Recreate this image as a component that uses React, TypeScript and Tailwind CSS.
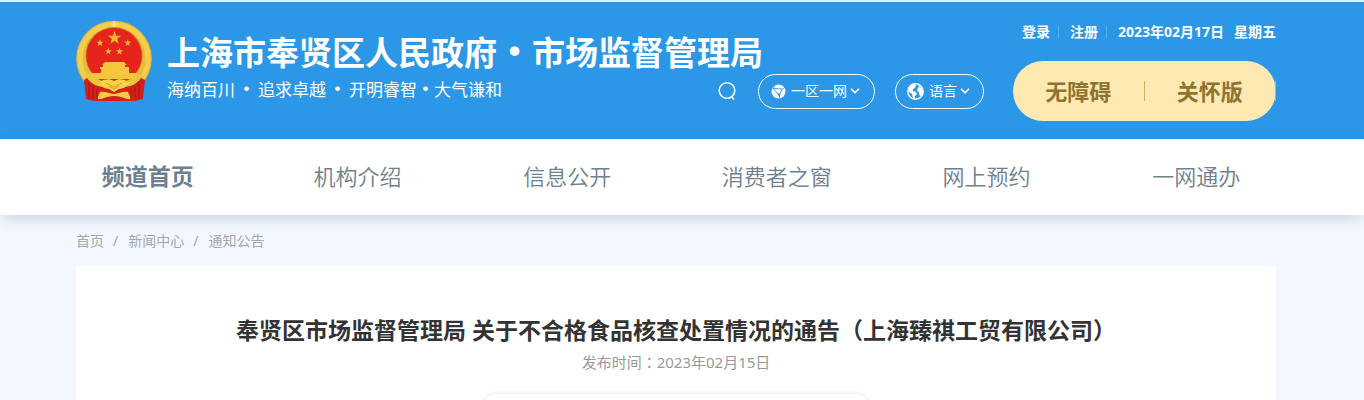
import { ChevronDown } from "lucide-react";

const NAV = ["频道首页", "机构介绍", "信息公开", "消费者之窗", "网上预约", "一网通办"];
const CRUMBS = ["首页", "新闻中心", "通知公告"];

function Star({ x, y, r }: { x: number; y: number; r: number }) {
  const points = Array.from({ length: 10 }, (_, i) => {
    const a = (i * Math.PI) / 5 - Math.PI / 2;
    const d = i % 2 ? r * 0.4 : r;
    return `${x + d * Math.cos(a)},${y + d * Math.sin(a)}`;
  }).join(" ");
  return <polygon points={points} fill="#f1b92f" />;
}

function Emblem() {
  return (
    <svg viewBox="0 0 76 82" className="h-[82px] w-[76px] shrink-0" aria-hidden="true">
      <circle cx="38" cy="38.5" r="37.8" fill="#e9bb3a" />
      <circle cx="38" cy="38.5" r="34" fill="none" stroke="#f3cf4e" strokeWidth="5" />
      <path d="M38 1v6M35 4h6" stroke="#fbe777" strokeWidth="1.5" />
      <circle cx="38" cy="35.5" r="28.5" fill="#c98f1e" />
      <circle cx="38" cy="35.8" r="27.8" fill="#e5251b" />
      <Star x={38.5} y={18} r={7} />
      <Star x={24} y={23} r={3.7} />
      <Star x={51.7} y={23} r={3.7} />
      <Star x={32.3} y={31.5} r={3.7} />
      <Star x={43.5} y={31.5} r={3.7} />
      <path d="M29 42h19l3 3H26zM27 45h22v2h4v2H24v-2h3zM25 49h28v4h8v6H15v-6h10z" fill="#f6c63c" />
      <path d="M11 53c7 8 16 9 21 9h13c5 0 14-1 20-9l4 6-12 12H20L8 59z" fill="#efc440" />
      <path d="M11 58c5 7 12 9 18 9 4 0 6 3 9 3s5-3 9-3c6 0 13-2 18-9l4 2-2 19-8 2H18l-8-2-2-19z" fill="#d3201a" />
      <path d="M27 60l6-1 5 2 5-2 6 1 4 3-5 5-5 1-5 3-5-3-5-1-5-5z" fill="#f8d34a" />
      <path d="M30 63l8 4 8-4M33 66l5 3 5-3" fill="none" stroke="#d69a22" />
      <path d="M24 72c6-1 9 2 14 2s8-3 14-2l3 7c-5 1-9-3-17-3s-12 4-17 3z" fill="#f5cb43" />
      <path d="M13 63v16M17 66v13M21 69v11M63 63v16M59 66v13M55 69v11" stroke="#a31410" fill="none" />
    </svg>
  );
}

function SearchIcon() {
  return (
    <svg viewBox="0 0 18 20" className="h-5 w-[18px]" fill="none" stroke="#fff" strokeWidth="1.6" aria-hidden="true">
      <circle cx="9" cy="9.5" r="7.8" />
      <path d="M13.5 15.500l2.500 3" />
    </svg>
  );
}

function NetworkIcon() {
  return (
    <svg viewBox="0 0 15 15" className="size-[15px]" aria-hidden="true">
      <circle cx="7.5" cy="7.5" r="7" fill="#fff" />
      <path d="M2 4.5l9.500.5-3.500 6zM2 4.500l2-3M11.500 5l2-1.500M8 11l1 3.500" fill="none" stroke="#2b97e6" strokeWidth="0.9" />
      <circle cx="8" cy="10.500" r="1.200" fill="#2b97e6" />
    </svg>
  );
}

function GlobeIcon() {
  return (
    <svg viewBox="0 0 17 17" className="size-[17px]" aria-hidden="true">
      <circle cx="8.5" cy="8.5" r="7.7" fill="none" stroke="#fff" strokeWidth="1.4" />
      <path d="M2 4l4-3 3 1-1 3-2 1v2l3 1 1 2-2 2v3l-2-1-1-4-3-2-1-3zM11 2l4 3 1 4-2 4-2-1v-3l-2-1 1-3 1-1z" fill="#fff" />
    </svg>
  );
}

export default function App() {
  return (
    <div className="min-h-screen bg-[#f3f8ff] font-['Noto_Sans','Noto_Sans_CJK_SC',sans-serif]">
      <header className="border-t-2 border-[#e4f2fd] bg-[#2b97e6] pr-3 text-white">
        <div className="mx-auto flex h-[137px] max-w-[1200px]">
          <div className="flex min-w-0 flex-1 pt-[18px]">
            <Emblem />
            <div className="ml-[15px] whitespace-nowrap pt-[11px] font-['Noto_Sans_CJK_SC',sans-serif]">
              <h1 className="flex text-[33px] font-bold leading-10">
                上海市奉贤区人民政府
                <span className="w-[35px] text-center font-['Liberation_Sans',sans-serif]">•</span>
                市场监督管理局
              </h1>
              <p className="flex pt-1 text-[17px] leading-7">
                海纳百川
                <span className="w-[23px] text-center font-['Liberation_Sans',sans-serif]">•</span>
                追求卓越
                <span className="w-[23px] text-center font-['Liberation_Sans',sans-serif]">•</span>
                开明睿智
                <span className="w-[17px] text-center font-['Liberation_Sans',sans-serif]">•</span>
                大气谦和
              </p>
            </div>
          </div>

          <div className="flex shrink-0 flex-col items-end">
            <div className="flex items-center pt-[19px] text-sm font-bold leading-[22px]">
              <a href="#login">登录</a>
              <span className="ml-2 mr-[11px] h-3 w-px bg-[#56adeb]" />
              <a href="#register">注册</a>
              <span className="ml-2 mr-[11px] h-3 w-px bg-[#56adeb]" />
              <span>2023年02月17日</span>
              <span className="ml-[10px]">星期五</span>
            </div>
            <div className="flex items-center pt-[18px]">
              <button aria-label="搜索" className="mr-[22px]">
                <SearchIcon />
              </button>
              <button className="mr-5 flex h-[35px] w-[117px] items-center justify-center rounded-full border border-white text-sm">
                <NetworkIcon />
                <span className="ml-[5px]">一区一网</span>
                <ChevronDown className="ml-px size-[14px]" strokeWidth={3} />
              </button>
              <button className="mr-[29px] flex h-[35px] w-[89px] items-center justify-center rounded-full border border-white text-sm">
                <GlobeIcon />
                <span className="ml-[5px]">语言</span>
                <ChevronDown className="ml-px size-[14px]" strokeWidth={3} />
              </button>
              <div className="flex h-[60px] w-[263px] items-center rounded-full bg-[#ffe9b2] text-[22px] font-bold text-[#8f7430]">
                <button className="h-5 flex-1 border-r border-[#c9ae6c] leading-5">无障碍</button>
                <button className="h-5 flex-1 border-r border-[#c9ae6c] leading-5">关怀版</button>
              </div>
            </div>
          </div>
        </div>
      </header>

      <nav className="bg-white pr-5 shadow-[0_6px_14px_-2px_rgba(60,90,120,0.22)]">
        <ul className="mx-auto grid h-[76px] max-w-[1258px] grid-cols-6 items-center pb-0.5 text-center text-[22px] text-[#6f8090]">
          {NAV.map((item, i) => (
            <li key={item}>
              <a href="#nav" className={i === 0 ? "text-[23px] font-bold" : "font-[350]"}>
                {item}
              </a>
            </li>
          ))}
        </ul>
      </nav>

      <main className="pr-3">
        <div className="mx-auto max-w-[1200px]">
          <div className="flex h-[51px] items-center text-sm text-[#a3a7ab]">
            {CRUMBS.map((crumb, i) => (
              <span key={crumb}>
                {i > 0 && <span className="ml-[9px] mr-[10px]">/</span>}
                <a href="#crumb">{crumb}</a>
              </span>
            ))}
          </div>

          <article className="bg-white pt-[47px] text-center">
            <h2 className="text-[23px] font-bold leading-[34px] text-[#333]">
              奉贤区市场监督管理局 关于不合格食品核查处置情况的通告（上海臻祺工贸有限公司）
            </h2>
            <p className="pt-1 text-[15px] leading-[22px] text-[#999]">
              发布时间<span className="font-['Noto_Sans_CJK_TC',sans-serif]">：</span>2023年02月15日
            </p>
            <div className="mx-auto mt-[21px] h-20 w-[382px] rounded-[10px] bg-white shadow-[0_0_4px_rgba(0,0,0,0.15)]" />
          </article>
        </div>
      </main>
    </div>
  );
}
